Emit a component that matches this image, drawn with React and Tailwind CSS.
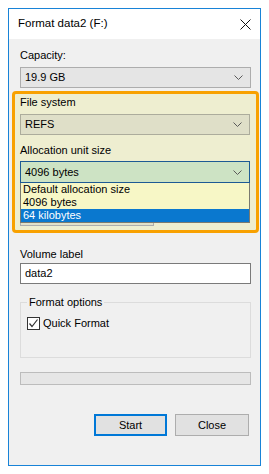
import React from 'react';

const font = { fontFamily: '"Liberation Sans", Arial, sans-serif' };

// small down chevron used by the combo boxes
const Chevron = () => (
    <svg width="9" height="5" viewBox="0 0 9 5" className="shrink-0">
        <path d="M0.5 0.5 L4.5 4.5 L8.5 0.5" fill="none" stroke="#5a5a5a" strokeWidth="1" />
    </svg>
);

const Combo = ({ value, className }) => (
    <div className={`flex items-center justify-between h-[21px] pl-[4px] pr-[7px] border ${className}`}>
        <span className="leading-none">{value}</span>
        <Chevron />
    </div>
);

const Label = ({ children }) => (
    <div className="h-[16px] leading-[16px]">{children}</div>
);

export default function App() {
    return (
        <div className="w-[269px] h-[474px] bg-white pt-[8px] pl-[8px] text-[11px] text-black" style={font}>
            <div className="w-[253px] h-[458px] border border-[#1883d7] flex flex-col">
                {/* Title bar */}
                <div className="h-[30px] bg-white flex items-center justify-between pl-[9px] pr-[9px] shrink-0">
                    <span className="text-[11.5px]">Format data2 (F:)</span>
                    <svg width="11" height="11" viewBox="0 0 11 11">
                        <path d="M0.5 0.5 L10.5 10.5 M10.5 0.5 L0.5 10.5" stroke="#111" strokeWidth="1" />
                    </svg>
                </div>

                {/* Body */}
                <div className="flex-1 bg-[#f0f0f0] pl-[11px] pr-[9px] flex flex-col">
                    <div className="mt-[8px]">
                        <Label>Capacity:</Label>
                    </div>
                    <Combo value="19.9 GB" className="mt-[4px] bg-[#e5e5e5] border-[#adadad]" />

                    {/* Highlighted section */}
                    <div className="mt-[3px] -ml-[8px] -mr-[8px] border-[3px] border-[#f8a100] rounded-[4px] bg-[#eeeed0] pl-[5px] pr-[6px] pb-[4px]">
                        <Label>File system</Label>
                        <Combo value="REFS" className="mt-[4px] bg-[#dfdfc8] border-[#acac9c]" />
                        <div className="mt-[7px]">
                            <Label>Allocation unit size</Label>
                        </div>
                        <div className="relative mt-[3px]">
                            <Combo value="4096 bytes" className="h-[22px] bg-[#cde3c4] border-[#1d5a94]" />
                            <div className="absolute left-0 right-0 top-full z-10 bg-[#f7f7c6] border border-t-0 border-[#7a7a70] leading-[13px] text-[11px]">
                                <div className="h-[13px] pl-[2px]">Default allocation size</div>
                                <div className="h-[13px] pl-[2px]">4096 bytes</div>
                                <div className="h-[13px] pl-[2px] bg-[#0a78cf] text-white">64 kilobytes</div>
                            </div>
                        </div>
                        <div className="mt-[19px] h-[24px] w-[134px] border border-[#adadad] bg-[#e1e1cb]"></div>
                    </div>

                    <div className="mt-[13px]">
                        <Label>Volume label</Label>
                    </div>
                    <div className="mt-[1px] h-[21px] bg-white border border-[#7a7a7a] flex items-center pl-[4px]">
                        data2
                    </div>

                    {/* Format options group */}
                    <div className="relative mt-[18px] h-[56px] border border-[#dcdcdc] pl-[6px] pt-[14px]">
                        <span className="absolute -top-[9px] left-[6px] px-[2px] bg-[#f0f0f0] leading-[16px]">Format options</span>
                        <div className="flex items-center gap-[3px]">
                            <div className="w-[13px] h-[13px] border border-[#333] bg-white flex items-center justify-center">
                                <svg width="11" height="11" viewBox="0 0 11 11">
                                    <path d="M1.5 5.5 L4 8.5 L9.5 1.5" fill="none" stroke="#333" strokeWidth="1.2" />
                                </svg>
                            </div>
                            <span className="leading-[13px]">Quick Format</span>
                        </div>
                    </div>

                    {/* Progress bar */}
                    <div className="mt-[14px] h-[13px] bg-[#e6e6e6] border border-[#bcbcbc]"></div>

                    {/* Buttons */}
                    <div className="mt-[29px] flex justify-end gap-[8px] pr-[2px]">
                        <button className="w-[73px] h-[22px] bg-[#e1e1e1] border-2 border-[#0078d7] leading-none">Start</button>
                        <button className="w-[74px] h-[22px] bg-[#e1e1e1] border border-[#adadad] leading-none">Close</button>
                    </div>
                </div>
            </div>
        </div>
    );
}
